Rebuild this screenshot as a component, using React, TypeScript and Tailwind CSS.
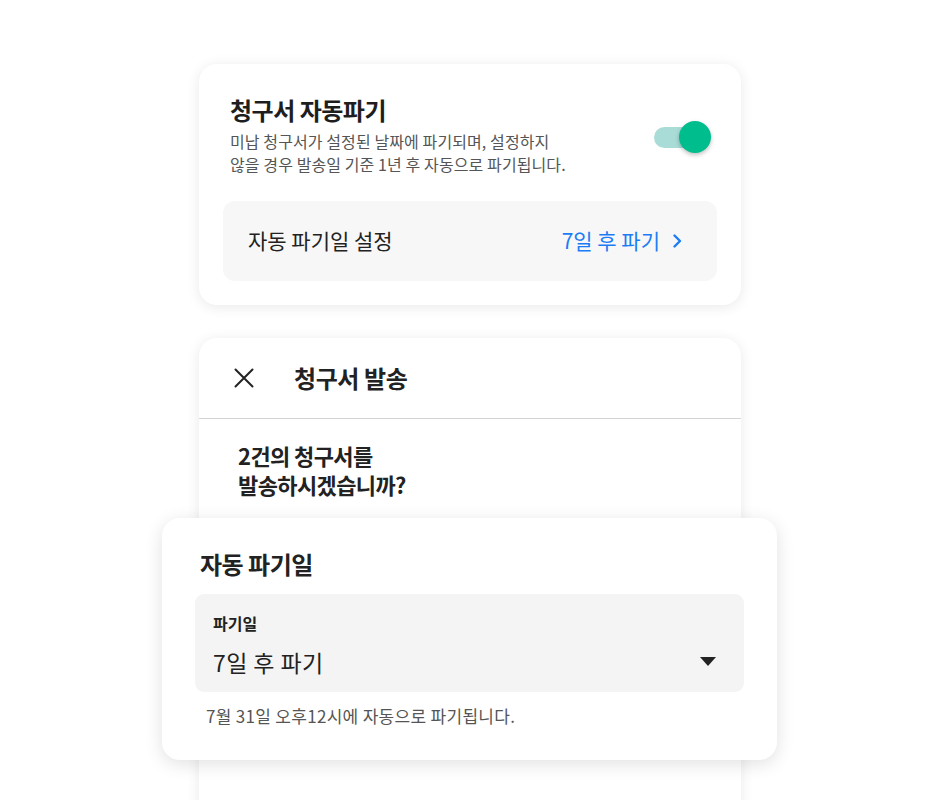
import React from 'react';

const font = { fontFamily: '"Noto Sans CJK KR", "Noto Sans", sans-serif' };

const Toggle: React.FC = () => (
  <div className="relative w-[57px] h-[34px] shrink-0 mt-[4px]">
    <div className="absolute left-0 top-[7px] w-[42px] h-[21px] rounded-full bg-[#a9dcd6]" />
    <div className="absolute right-0 top-[1px] w-[32px] h-[32px] rounded-full bg-[#00bd8e] shadow-[0_2px_4px_rgba(0,0,0,0.25)]" />
  </div>
);

const App: React.FC = () => {
  return (
    <div className="h-[800px] overflow-hidden bg-white flex flex-col items-center pt-[64px]" style={font}>
      <div className="w-[542px] rounded-[18px] bg-white shadow-[0_2px_14px_rgba(0,0,0,0.09)] pt-[30px] pb-[24px] px-[24px]">
        <div className="flex items-center justify-between pl-[7px] pr-[6px]">
          <div>
            <h2 className="text-[24px] leading-[32px] font-bold text-[#1e1e1e] tracking-[-0.5px]">청구서 자동파기</h2>
            <p className="mt-[4px] text-[16px] leading-[23px] text-[#555] tracking-[0.1px]">
              미납 청구서가 설정된 날짜에 파기되며, 설정하지
              <br />
              않을 경우 발송일 기준 1년 후 자동으로 파기됩니다.
            </p>
          </div>
          <Toggle />
        </div>
        <div className="mt-[25px] h-[80px] rounded-[12px] bg-[#f7f7f8] flex items-center justify-between pl-[25px] pr-[35px]">
          <span className="text-[21px] text-[#222]">자동 파기일 설정</span>
          <span className="flex items-center gap-[12px] text-[21px] text-[#1b7cf4]">
            7일 후 파기
            <svg width="10" height="16" viewBox="0 0 10 16" fill="none">
              <path d="M2.5 2.5l5.5 5.5-5.5 5.5" stroke="#1b7cf4" strokeWidth="2.4" strokeLinecap="round" strokeLinejoin="round" />
            </svg>
          </span>
        </div>
      </div>

      <div className="relative mt-[33px] w-[542px]">
        <div className="h-[500px] rounded-t-[18px] bg-white shadow-[0_2px_14px_rgba(0,0,0,0.09)]">
          <div className="h-[81px] flex items-center border-b border-[#d4d4d4]">
            <svg className="ml-[35px]" width="20" height="20" viewBox="0 0 20 20" fill="none">
              <path d="M1.5 1.5l17 17M18.5 1.5l-17 17" stroke="#222" strokeWidth="2" strokeLinecap="round" />
            </svg>
            <span className="ml-[40px] text-[24px] leading-[32px] font-bold text-[#222] tracking-[-0.4px]">청구서 발송</span>
          </div>
          <p className="pl-[39px] pt-[22px] text-[22px] leading-[29px] font-bold text-[#222] tracking-[-0.6px]">
            2건의 청구서를
            <br />
            발송하시겠습니까?
          </p>
        </div>

        <div className="absolute left-[-37px] top-[180px] w-[615px] h-[242px] rounded-[18px] bg-white shadow-[0_4px_18px_rgba(0,0,0,0.12)] px-[33px] pt-[30px]">
          <h3 className="pl-[5px] text-[24px] leading-[32px] font-bold text-[#222] tracking-[-0.5px]">자동 파기일</h3>
          <div className="mt-[14px] h-[98px] rounded-[9px] bg-[#f4f4f4] flex justify-between pl-[18px] pr-[28px] pt-[18px]">
            <div>
              <div className="text-[16px] leading-[22px] font-bold text-[#222]">파기일</div>
              <div className="mt-[12px] text-[23px] leading-[32px] text-[#222] tracking-[0.4px]">7일 후 파기</div>
            </div>
            <svg className="mt-[45px]" width="16" height="9" viewBox="0 0 16 9">
              <path d="M0 0h16L8 9z" fill="#222" />
            </svg>
          </div>
          <p className="mt-[12px] pl-[11px] text-[17px] leading-[24px] text-[#555] tracking-[0.3px]">7월 31일 오후12시에 자동으로 파기됩니다.</p>
        </div>
      </div>
    </div>
  );
};

export default App;
